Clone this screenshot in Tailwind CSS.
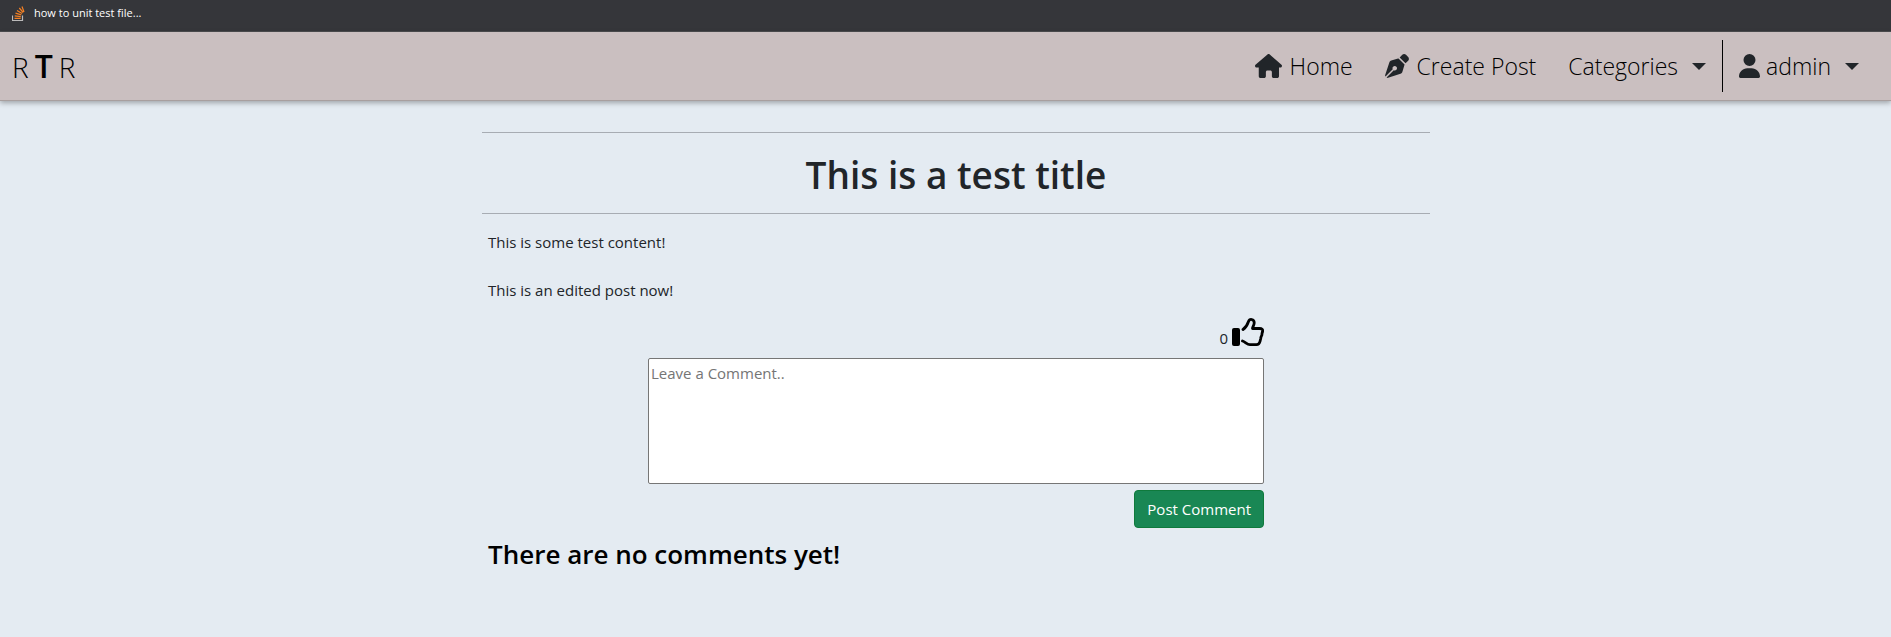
<!DOCTYPE html>
<html lang="en">
<head>
<meta charset="utf-8">
<meta name="viewport" content="width=device-width, initial-scale=1">
<title>This is a test title</title>
<script src="https://cdn.jsdelivr.net/npm/@tailwindcss/browser@4"></script>
</head>
<body class="min-h-screen bg-[#e4ebf2] font-['Open_Sans','Noto_Sans',sans-serif] text-[15px] leading-6 text-[#212529]">
  <div class="flex h-8 items-start border-b border-[#4c4d50] bg-[#35363a] pl-3 pt-1">
    <a href="#" class="flex items-center gap-2 text-[11px] leading-[18px] text-white">
      <svg class="h-4 w-[14px]" viewBox="0 0 14 16" fill="none" aria-hidden="true">
        <path d="M.5 10.500v5h10v-5" stroke="#bcbbbb" stroke-width="1.200"/>
        <path d="M2.500 13.300h6.200M2.700 10.900l6.100 .7M3.500 8.200l5.800 1.700M5 5.400l5.100 3.100M7.300 3l3.900 4.500M10 1.500l2 5.500" stroke="#f48024" stroke-width="1.200"/>
      </svg>
      how to unit test file...
    </a>
  </div>

  <nav class="flex h-[69px] items-center justify-between border-b border-[#a89f9f] bg-[#cabfc0] pl-3 pr-4 shadow-[0_2px_5px_rgba(0,0,0,0.3)]">
    <a href="#" class="flex items-baseline gap-[6px] text-[28px] font-light leading-10 text-black">
      <span>R</span><span class="text-[32px] font-semibold">T</span><span>R</span>
    </a>
    <ul class="flex items-center text-[23px] font-light leading-9 text-black">
      <li class="px-4"><a href="#" class="flex items-center gap-2">
        <svg class="h-6 w-[27px] text-[#212529]" viewBox="0 0 576 512" fill="currentColor" aria-hidden="true"><path d="M575.800 255.500c0 18-15 32.100-32 32.100h-32l.7 160.200c0 2.700-.2 5.400-.5 8.100V472c0 22.100-17.900 40-40 40h-72c-22.100 0-40-17.900-40-40v-88c0-17.700-14.300-32-32-32h-64c-17.700 0-32 14.300-32 32v88c0 22.100-17.900 40-40 40h-72c-22.100 0-40-17.900-40-40V287.600H32c-18 0-32-14-32-32.100 0-9 3-17 10-24L266.400 8c7-7 15-8 22-8s15 2 21 7l255.400 224.500c8 7 12 15 11 24z"/></svg>
        Home</a></li>
      <li class="px-4"><a href="#" class="flex items-center gap-2">
        <svg class="size-6 text-[#212529]" viewBox="0 0 512 512" fill="currentColor" aria-hidden="true"><path fill-rule="evenodd" d="M368.400 18.300L312.700 74.100 437.900 199.300l55.700-55.700c21.900-21.900 21.900-57.300 0-79.200L447.600 18.300c-21.900-21.900-57.300-21.900-79.200 0zM288 94.600l-9.200 2.800L134.700 140.600c-19.900 6-35.700 21.200-42.300 41L3.800 445.800c-3.800 11.300-1 23.900 7.300 32.400L164.700 324.700c-3-6.300-4.700-13.300-4.700-20.700 0-26.500 21.500-48 48-48s48 21.500 48 48-21.500 48-48 48c-7.400 0-14.400-1.700-20.700-4.700L33.700 500.900c8.600 8.300 21.100 11.200 32.400 7.300l264.300-88.600c19.700-6.600 35-22.400 41-42.300l43.200-144.100 2.800-9.200L288 94.600z"/></svg>
        Create Post</a></li>
      <li><button type="button" class="flex items-center gap-[14px] px-4">Categories
        <svg class="h-[7px] w-[14px]" viewBox="0 0 14 7" fill="#212529" aria-hidden="true"><path d="M0 0h14L7 7z"/></svg></button></li>
      <li class="flex h-[52px] items-center border-l border-black"><button type="button" class="flex items-center gap-[6px] px-4">
        <svg class="h-6 w-[21px] text-[#212529]" viewBox="0 0 448 512" fill="currentColor" aria-hidden="true"><path d="M224 256A128 128 0 1 0 224 0a128 128 0 1 0 0 256zm-45.700 48C79.800 304 0 383.800 0 482.300 0 498.700 13.300 512 29.700 512h388.600c16.400 0 29.700-13.300 29.700-29.700C448 383.800 368.200 304 269.700 304h-91.400z"/></svg>
        admin
        <svg class="ml-2 h-[7px] w-[14px]" viewBox="0 0 14 7" fill="#212529" aria-hidden="true"><path d="M0 0h14L7 7z"/></svg></button></li>
    </ul>
  </nav>

  <main class="pl-[21px]">
    <article class="mx-auto max-w-[948px] pt-[31px]">
      <h1 class="border-y border-[#a7acb3] pb-[14px] pt-[18px] text-center text-[37px] font-semibold leading-[48px]">This is a test title</h1>
      <div class="px-[6px] pt-4">
        <p>This is some test content!</p>
        <p class="pt-6">This is an edited post now!</p>
        <div class="mx-[160px] flex flex-col items-end pt-4">
          <div class="flex h-8 items-end gap-1">
            <span class="text-[15px] leading-6">0</span>
            <button type="button" aria-label="Like" class="pb-1">
              <svg class="h-7 w-8" viewBox="0 0 32 28" fill="none" aria-hidden="true">
                <rect x="0" y="10" width="8" height="18" rx="2" fill="#000"/>
                <path d="M11 11.500C14 9.500 15.500 6.500 16.500 3.500C17.500 .6 22.300 .6 22.200 5C22.100 7.500 20.500 9 20.500 10.500H27.500C30 10.500 31 11.500 30.600 13.500L30 15.500L29.900 17L29 19L28.600 21L28 23.500C27.400 25.800 26.500 26.600 24.500 26.600H18C15 26.600 13.500 24 10.500 23" stroke="#000" stroke-width="2.800" stroke-linecap="round" stroke-linejoin="round"/>
              </svg>
            </button>
          </div>
          <textarea aria-label="Leave a Comment" placeholder="Leave a Comment.." class="mt-2 block h-[126px] w-full resize-none rounded-xs border border-[#767676] bg-white px-[2px] py-[2px] placeholder:text-[#757575]"></textarea>
          <button type="button" class="mt-[6px] h-[38px] rounded border border-[#0f7a3c] bg-[#198754] px-3 text-white">Post Comment</button>
        </div>
        <h3 class="pt-2 text-[26px] font-semibold leading-9 text-black">There are no comments yet!</h3>
      </div>
    </article>
  </main>
</body>
</html>
